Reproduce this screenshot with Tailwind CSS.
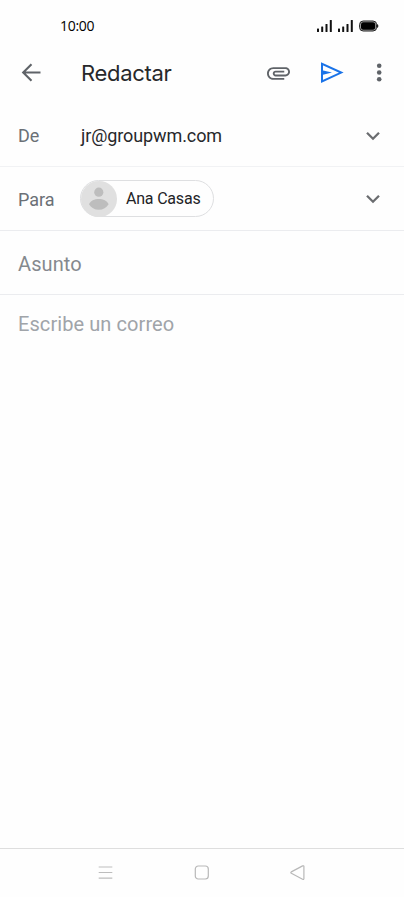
<!DOCTYPE html>
<html lang="es">
<head>
    <meta charset="UTF-8">
    <meta name="viewport" content="width=device-width, initial-scale=1.0">
    <title>Redactar</title>
    <script src="https://cdn.jsdelivr.net/npm/@tailwindcss/browser@4"></script>
</head>
<body class="bg-[#fefefe] font-['Roboto',sans-serif]">
    <div class="flex flex-col h-[897px] w-[404px] overflow-hidden">
        <!-- Barra de estado -->
        <div class="flex items-center justify-between h-[52px] pl-[60px] pr-[25px] shrink-0">
            <span class="font-['Open_Sans',sans-serif] text-[14px] leading-5 tracking-[-0.3px] text-black">10:00</span>
            <div class="flex items-center">
                <svg class="w-[15px] h-3 mr-[6px]" viewBox="0 0 15 12" fill="#111">
                    <rect x="0" y="8.5" width="2" height="3.5" rx=".5"/>
                    <rect x="4.2" y="6.5" width="2" height="5.5" rx=".5"/>
                    <rect x="8.5" y="4" width="2" height="8" rx=".5"/>
                    <rect x="12.8" y="0" width="2" height="12" rx=".5"/>
                </svg>
                <svg class="w-[15px] h-3 mr-[6px]" viewBox="0 0 15 12" fill="#111">
                    <rect x="0" y="8.5" width="2" height="3.5" rx=".5"/>
                    <rect x="4.2" y="6.5" width="2" height="5.5" rx=".5"/>
                    <rect x="8.5" y="4" width="2" height="8" rx=".5"/>
                    <rect x="12.8" y="0" width="2" height="12" rx=".5"/>
                </svg>
                <svg class="w-5 h-3" viewBox="0 0 20 12">
                    <rect x=".6" y="1" width="17" height="10" rx="3.6" fill="#aaa" stroke="#222" stroke-width="1"/>
                    <rect x="2" y="2.3" width="14.2" height="7.4" rx="2.2" fill="#000"/>
                    <path d="M18 4q1.4.3 1.4 2T18 8z" fill="#222"/>
                </svg>
            </div>
        </div>

        <!-- Cabecera -->
        <header class="flex items-center h-[42px] pl-[19px] shrink-0">
            <svg class="w-6 h-6" viewBox="0 0 24 24" fill="none" stroke="#5f6368" stroke-width="2.1">
                <path d="M21.5 11.5H4.6M12.5 3.2l-8.3 8.3 8.3 8.3"/>
            </svg>
            <h1 class="ml-[38px] w-[186px] font-['Inter',sans-serif] text-[22px] leading-7 tracking-[-0.3px] text-[#27282b]">Redactar</h1>
            <svg class="w-[23px] h-[13px]" viewBox="2 7 20 11" fill="#5f6368">
                <path d="M2 12.5C2 9.46 4.46 7 7.5 7H18c2.21 0 4 1.79 4 4s-1.79 4-4 4H9.5C8.12 15 7 13.88 7 12.5S8.12 10 9.5 10H17v1.6H9.41c-1 0-1 1.8 0 1.8H18c1.3 0 2.4-1.1 2.4-2.4S19.3 8.6 18 8.6H7.5C5.35 8.6 3.6 10.35 3.6 12.5S5.35 16.4 7.5 16.4H17V18H7.5C4.46 18 2 15.54 2 12.5z"/>
            </svg>
            <svg class="w-6 h-6 ml-[30px]" viewBox="0 0 24 24" fill="none" stroke="#1a73e8" stroke-width="2">
                <path d="M2 2.8v17.6l19.2-8.8z"/>
                <path d="M2 9.2l10 2.4-10 2.4z" fill="#1a73e8" stroke="none"/>
            </svg>
            <svg class="w-6 h-6 ml-6" viewBox="0 0 24 24" fill="#5f6368">
                <circle cx="11.2" cy="4.8" r="2.3"/>
                <circle cx="11.2" cy="11.5" r="2.3"/>
                <circle cx="11.2" cy="18.2" r="2.3"/>
            </svg>
        </header>

        <!-- Remitente -->
        <div class="flex items-center h-[73px] pt-[11px] px-[18px] border-b border-[#f1f2f4] shrink-0">
            <span class="w-[63px] text-[18px] leading-6 text-[#6b7076]">De</span>
            <span class="flex-1 text-[18px] leading-6 tracking-[-0.1px] text-[#27282b]">jr@groupwm.com</span>
            <svg class="w-[14px] h-[10px] mr-[6px]" viewBox="0 0 14 10" fill="none" stroke="#6b6d70" stroke-width="2.3">
                <path d="M1 1.7L7 7.7l6-6"/>
            </svg>
        </div>

        <!-- Destinatario -->
        <div class="flex items-center h-16 px-[18px] border-b border-[#ebecef] shrink-0">
            <span class="w-[62px] pt-[2px] text-[18px] leading-6 text-[#6b7076]">Para</span>
            <div class="flex items-center h-[37px] w-[134px] rounded-full border border-[#dedfe1]">
                <svg class="w-9 h-9 shrink-0" viewBox="0 0 36 36">
                    <circle cx="18" cy="18" r="18" fill="#e0e0e0"/>
                    <circle cx="17.8" cy="11.2" r="4.6" fill="#bdbdbd"/>
                    <path d="M8 23.2c1.5-3.5 5.5-5.2 9.8-5.2s8.3 1.7 9.8 5.2c-2 3.5-5.5 5.6-9.8 5.6S10 26.7 8 23.2z" fill="#bdbdbd"/>
                </svg>
                <span class="ml-[9px] text-[16px] leading-5 tracking-[-0.2px] whitespace-nowrap text-[#222326]">Ana Casas</span>
            </div>
            <svg class="w-[14px] h-[10px] ml-auto mr-[6px]" viewBox="0 0 14 10" fill="none" stroke="#6b6d70" stroke-width="2.3">
                <path d="M1 1.7L7 7.7l6-6"/>
            </svg>
        </div>

        <!-- Asunto -->
        <div class="flex items-center h-16 px-[18px] pt-[2px] border-b border-[#ebecef] shrink-0">
            <span class="text-[20px] leading-6 tracking-[0.1px] text-[#85898e]">Asunto</span>
        </div>

        <!-- Mensaje -->
        <main class="flex-1 px-[18px] pt-[17px]">
            <p class="text-[20px] leading-6 tracking-[0.08px] text-[#a0a4a9]">Escribe un correo</p>
        </main>

        <!-- Botones de navegación del sistema -->
        <nav class="flex h-[49px] border-t border-[#dedede] pl-[98px] shrink-0">
            <svg class="w-[15px] h-[15px] mt-4" viewBox="0 0 15 15" stroke="#bdbdbd" stroke-width="1.2">
                <path d="M.7 2h13.6M.7 7.5h13.6M.7 13.2h13.6"/>
            </svg>
            <svg class="w-[15px] h-[15px] mt-4 ml-[81px]" viewBox="0 0 15 15" fill="none" stroke="#b8b8b8" stroke-width="1.2">
                <rect x="1.3" y="1" width="13" height="13" rx="3"/>
            </svg>
            <svg class="w-[15px] h-4 mt-4 ml-[81px]" viewBox="0 0 15 16" fill="none" stroke="#b8b8b8" stroke-width="1.2" stroke-linejoin="round">
                <path d="M1.3 6.9L12.6.9q1.3-.5 1.3.7v12q0 1.3-1.3.7L1.3 8.3q-1-.7 0-1.4z"/>
            </svg>
        </nav>
    </div>
</body>
</html>
